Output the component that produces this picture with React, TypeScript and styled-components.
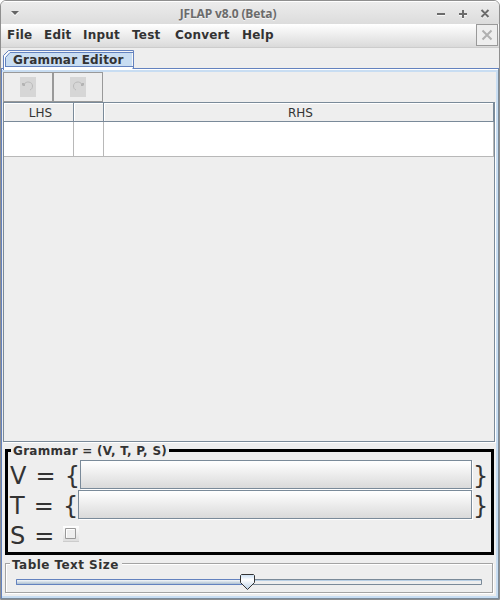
import React from "react";
import styled, { createGlobalStyle } from "styled-components";

const Global = createGlobalStyle`
  * { box-sizing: border-box; }
  body { margin: 0; background: #fff; overflow: hidden; }
`;

const Frame = styled.div`
  width: 500px;
  height: 600px;
  display: flex;
  flex-direction: column;
  border: 1px solid #8f8f8f;
  border-radius: 6px 6px 0 0;
  background: #eee;
  color: #333;
  font-family: "DejaVu Sans", sans-serif;
  overflow: hidden;
`;

const TitleBar = styled.header`
  height: 23px;
  flex: none;
  display: grid;
  grid-template-columns: 76px 1fr 124px;
  align-items: center;
  border-top: 1px solid #fff;
  background: linear-gradient(#ececec, #dcdcdc);
`;

const Title = styled.h1`
  margin: 0;
  padding: 1px 0 0 4px;
  text-align: center;
  font: bold 12px/18px "Open Sans", sans-serif;
  letter-spacing: -0.14px;
  color: #6b6b6b;
  text-shadow: 0 1px 0 #f4f4f4;
  white-space: nowrap;
`;

const WindowMenu = styled.svg`
  display: block;
  margin: 0 0 0 9px;
`;

const WindowControls = styled.svg`
  display: block;
  margin: 0 0 0 58px;
`;

const MenuBar = styled.nav`
  height: 24px;
  flex: none;
  display: flex;
  border-bottom: 1px solid #ccc;
  background: linear-gradient(#fff, #dadada);
`;

const MenuItem = styled.span<{ $width: number }>`
  width: ${(p) => p.$width}px;
  flex: none;
  font: bold 12px/22px "DejaVu Sans", sans-serif;
  letter-spacing: 0.2px;
  white-space: nowrap;
  &:first-child { margin-left: 6px; }
`;

const DismissButton = styled.button`
  width: 22px;
  height: 22px;
  margin-left: auto;
  margin-right: 1px;
  padding: 0;
  border: 1px solid #999;
  background: #eee;
  svg { display: block; }
`;

const TabStrip = styled.div`
  height: 21px;
  flex: none;
  display: flex;
  padding: 2px 0 0 1px;
  background: linear-gradient(#6382bf, #6382bf) 0 100% / 100% 1px no-repeat, #eee;
`;

const Tab = styled.div`
  position: relative;
  width: 133px;
  height: 19px;
  svg { display: block; }
`;

const TabLabel = styled.span`
  position: absolute;
  left: 11px;
  top: 2px;
  font: bold 12px/17px "DejaVu Sans", sans-serif;
  letter-spacing: 0.2px;
  white-space: nowrap;
`;

const TabPage = styled.main`
  flex: 1;
  min-height: 0;
  display: flex;
  flex-direction: column;
  padding: 3px 4px 0 1px;
  border-left: 1px solid #6382bf;
  border-right: 1px solid #7a8a99;
  border-bottom: 1px solid #7a8a99;
  box-shadow: inset 0 1px #fff, inset 0 3px #c8ddf2, inset -2px -2px #c8ddf2;
`;

const Toolbar = styled.div`
  display: flex;
  height: 30px;
  flex: none;
`;

const ToolButton = styled.button`
  width: 50px;
  height: 30px;
  padding: 0;
  display: grid;
  place-items: center;
  border: 1px solid #999;
  background: #eee;
`;

const ScrollPane = styled.section`
  height: 340px;
  flex: none;
  border: 1px solid #7a8a99;
  box-shadow: 1px 1px #fff;
  margin-right: -1px;
`;

const Columns = styled.div`
  display: grid;
  grid-template-columns: 70px 30px 1fr;
`;

const HeaderCell = styled.div`
  height: 19px;
  border-right: 1px solid #7a8a99;
  border-bottom: 1px solid #7a8a99;
  box-shadow: inset 1px 1px #fff;
  text-align: center;
  font: 12px/20px "DejaVu Sans", sans-serif;
  padding: 0 0 0 4px;
`;

const BodyCell = styled.div`
  height: 35px;
  border-right: 1px solid #b8b8b8;
  border-bottom: 1px solid #b8b8b8;
  background: #fff;
`;

const GrammarBox = styled.section`
  position: relative;
  width: 489px;
  height: 106px;
  flex: none;
  margin: 7px 0 0 2px;
  border: 3px solid #000;
  padding: 8px 0 0 2px;
`;

const Legend = styled.span<{ $left: number; $width: number; $top: number; $spacing: number }>`
  position: absolute;
  left: ${(p) => p.$left}px;
  top: ${(p) => p.$top}px;
  width: ${(p) => p.$width}px;
  padding-left: 2px;
  background: #eee;
  font: bold 12px/14px "DejaVu Sans", sans-serif;
  letter-spacing: ${(p) => p.$spacing}px;
  white-space: nowrap;
`;

const SetRow = styled.div`
  display: flex;
  height: 30px;
  align-items: flex-start;
`;

const SetText = styled.span<{ $width: number }>`
  width: ${(p) => p.$width}px;
  flex: none;
  font: 24px/32px "DejaVu Sans", sans-serif;
  letter-spacing: 0.75px;
  white-space: pre;
`;

const SetButton = styled.button<{ $width: number }>`
  width: ${(p) => p.$width}px;
  height: 29px;
  margin-right: 1px;
  flex: none;
  border: 1px solid #7a8a99;
  background: linear-gradient(#fff, #dadada);
  box-shadow: 1px 1px #fff;
`;

const StartButton = styled.button`
  width: 16px;
  height: 16px;
  margin: 6px 0 0 0;
  padding: 1px 2px;
  border: 0;
  border-bottom: 1px solid #ccc;
  background: linear-gradient(#fff, #dedede);
  svg { display: block; }
`;

const SizeBox = styled.section`
  position: relative;
  width: 488px;
  height: 30px;
  flex: none;
  margin: 8px 0 0 2px;
  border: 1px solid #a3a3a3;
  box-shadow: 1px 1px #fff, inset 1px 1px #fff;
  padding: 10px 0 0 10px;
`;

const Slider = styled.svg`
  display: block;
`;

const RotateIcon = styled.svg<{ $flip?: boolean }>`
  display: block;
  transform: ${(p) => (p.$flip ? "scaleX(-1)" : "none")};
`;

const Rotate = ({ flip }: { flip?: boolean }) => (
  <RotateIcon width="16" height="20" $flip={flip}>
    <path d="M0 0h16v20H0z" fill="#d6d6d6" />
    <path d="M4 7.5C6 3.5 12.5 4.5 12.5 9c0 2-.8 3.2-2.5 4" fill="none" stroke="#bababa" />
    <path d="M2 6h2l1 1v2H3L2 8z" fill="#b3b3b3" />
  </RotateIcon>
);

const MENUS = [
  { label: "File", width: 37 },
  { label: "Edit", width: 39 },
  { label: "Input", width: 49 },
  { label: "Test", width: 43 },
  { label: "Convert", width: 67 },
  { label: "Help", width: 40 },
];

export default function App() {
  return (
    <>
      <Global />
      <Frame>
        <TitleBar>
          <WindowMenu width="10" height="6">
            <path d="M1 2h8L5 6z" fill="#fff" />
            <path d="M1 1h8L5 5z" fill="#666" />
          </WindowMenu>
          <Title>JFLAP v8.0 (Beta)</Title>
          <WindowControls width="60" height="12" fill="none" strokeWidth="2">
            <path d="M4 8h8M26 8h8M30 4v8M48.5 4l7 7M55.5 4l-7 7" stroke="#f8f8f8" />
            <path d="M4 7h8M26 7h8M30 3v8M48.5 3l7 7M55.5 3l-7 7" stroke="#6b6b6b" />
          </WindowControls>
        </TitleBar>
        <MenuBar>
          {MENUS.map((m) => (
            <MenuItem key={m.label} $width={m.width}>{m.label}</MenuItem>
          ))}
          <DismissButton aria-label="Close tab">
            <svg width="20" height="20">
              <path d="M5.5 5.5l9 9M14.5 5.5l-9 9" stroke="#b0b0b0" strokeWidth="2" />
            </svg>
          </DismissButton>
        </MenuBar>
        <TabStrip>
          <Tab>
            <svg width="133" height="20">
              <path d="M1.5 20V6.5l5-5h124V20z" fill="#fff" />
              <path d="M3.5 17V7l4-4H130v14z" fill="#c8ddf2" />
              <path d="M1.5 20V5.5L6.5.5h125V18" fill="none" stroke="#6382bf" />
              <path d="M3.5 16.5v-9L8 2.5h123M3 16.5h128" fill="none" stroke="#6382bf" />
            </svg>
            <TabLabel>Grammar Editor</TabLabel>
          </Tab>
        </TabStrip>
        <TabPage>
          <Toolbar>
            <ToolButton aria-label="Undo"><Rotate /></ToolButton>
            <ToolButton aria-label="Redo"><Rotate flip /></ToolButton>
          </Toolbar>
          <ScrollPane>
            <Columns>
              <HeaderCell>LHS</HeaderCell>
              <HeaderCell />
              <HeaderCell>RHS</HeaderCell>
              <BodyCell />
              <BodyCell />
              <BodyCell />
            </Columns>
          </ScrollPane>
          <GrammarBox>
            <Legend $left={3} $top={-8} $width={158} $spacing={0.28}>Grammar = (V, T, P, S)</Legend>
            <SetRow>
              <SetText $width={70}>{"V = {"}</SetText>
              <SetButton $width={392} aria-label="Variables" />
              <SetText $width={16}>{"}"}</SetText>
            </SetRow>
            <SetRow>
              <SetText $width={68}>{"T = {"}</SetText>
              <SetButton $width={394} aria-label="Terminals" />
              <SetText $width={16}>{"}"}</SetText>
            </SetRow>
            <SetRow>
              <SetText $width={53}>S =</SetText>
              <StartButton aria-label="Start variable">
                <svg width="12" height="12">
                  <path d="M.5.5h10v10H.5z" fill="#eee" stroke="#999" />
                  <path d="M1.5 9.5v-8h8" fill="none" stroke="#fff" />
                </svg>
              </StartButton>
            </SetRow>
          </GrammarBox>
          <SizeBox>
            <Legend $left={4} $top={-6} $width={112} $spacing={0.45}>Table Text Size</Legend>
            <Slider width="468" height="17">
              <defs>
                <linearGradient id="fill" x1="0" y1="0" x2="0" y2="1">
                  <stop offset="0" stopColor="#fff" />
                  <stop offset="1" stopColor="#a3b8cc" />
                </linearGradient>
                <linearGradient id="thumb" x1="0" y1="0" x2="0" y2="1">
                  <stop offset="0" stopColor="#c8ddf2" />
                  <stop offset=".35" stopColor="#fff" />
                  <stop offset="1" stopColor="#b8cfe5" />
                </linearGradient>
              </defs>
              <path d="M.5 5.5h465v5H.5z" fill="#eee" stroke="#7a8a99" />
              <path d="M232 6.5h233" stroke="#b8cfe5" />
              <path d="M.5 5.5h231v5H.5z" fill="url(#fill)" stroke="#6382bf" />
              <path d="M225.5.5h12l1 1v7l-7 7-7-7v-7z" fill="url(#thumb)" stroke="#333" />
            </Slider>
          </SizeBox>
        </TabPage>
      </Frame>
    </>
  );
}
